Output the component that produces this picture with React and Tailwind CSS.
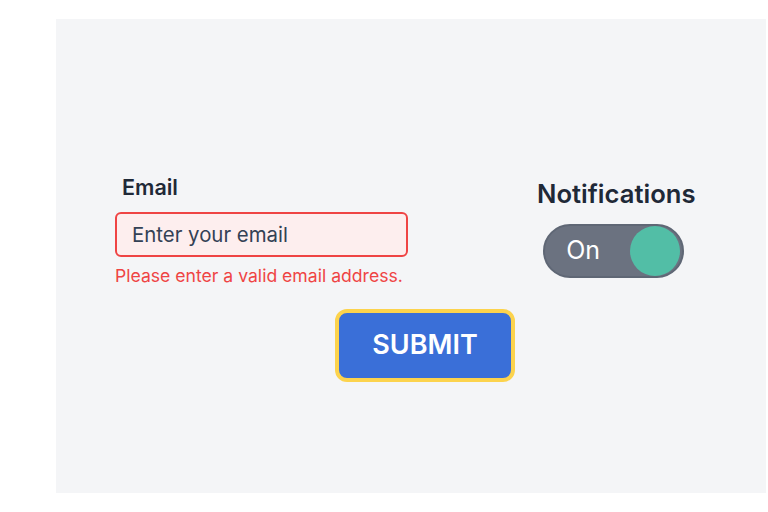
import React, { useState } from 'react';

const App = () => {
    const [email, setEmail] = useState('');
    const [on, setOn] = useState(true);

    return (
        <div className="w-[768px] h-[512px] bg-white pt-[19px] pl-[56px]" style={{ fontFamily: 'Inter, "Noto Sans", sans-serif' }}>
            <div className="w-[710px] h-[474px] bg-[#f4f5f7] pt-[154px] pl-[59px]">

                {/* Form row */}
                <div className="flex items-start">
                    <div className="w-[293px] flex flex-col">
                        <label className="pl-[7px] text-[21.5px] leading-[28px] font-semibold text-[#1f2937] mb-[11px]">Email</label>
                        <input
                            type="email"
                            value={email}
                            onChange={(e) => setEmail(e.target.value)}
                            placeholder="Enter your email"
                            className="h-[45px] w-full rounded-[6px] border-2 border-[#ef4444] bg-[#fdeeee] px-[15px] text-[20.4px] text-[#334155] placeholder:text-[#334155] outline-none"
                        />
                        <p className="mt-[7px] text-[17.6px] leading-[24px] text-[#ef4444]">Please enter a valid email address.</p>
                    </div>

                    <div className="ml-[129px] mt-[5px] flex flex-col items-center">
                        <h3 className="text-[25.6px] leading-[32px] font-semibold text-[#1f2937]">Notifications</h3>
                        <button
                            onClick={() => setOn(!on)}
                            className="mt-[14px] ml-[-5px] w-[141px] h-[54px] rounded-full bg-[#6b7280] border-2 border-[#5f6775] flex items-center justify-between pl-[21px] pr-[2px]"
                        >
                            <span className="text-[25px] text-white">{on ? 'On' : 'Off'}</span>
                            <span className="w-[50px] h-[50px] rounded-full bg-[#52bea6]" />
                        </button>
                    </div>
                </div>

                {/* Submit */}
                <button className="mt-[21px] ml-[220px] w-[180px] h-[73px] rounded-[12px] border-4 border-[#fcd34d] bg-[#3a6fd8] text-white text-[27px] font-semibold">
                    SUBMIT
                </button>

            </div>
        </div>
    );
};

export default App;
